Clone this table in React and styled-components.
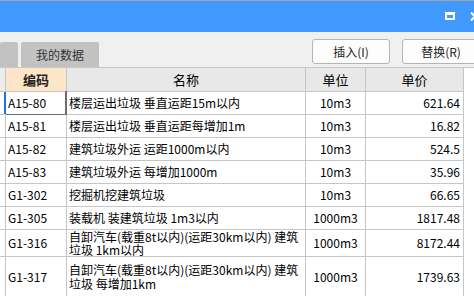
import React from "react";
import styled, {createGlobalStyle} from "styled-components";

const GlobalStyle = createGlobalStyle`
    body {
        margin: 0;
        font-family: "Noto Sans CJK SC", "Noto Sans", sans-serif;
        color: #000;
    }
`;

const Window = styled.div`
    width: 474px;
    height: 296px;
    overflow: hidden;
    background: #fff;
`;

const TitleBar = styled.div`
    height: 32px;
    box-sizing: border-box;
    border-top: 1px solid #a6a6a6;
    background: #4198fe;
    display: flex;
    justify-content: flex-end;
    align-items: flex-start;
    padding-top: 11px;
`;

const MaxIcon = styled.span`
    width: 10px;
    height: 8px;
    box-sizing: border-box;
    border: 2px solid #fff;
    border-top-width: 3px;
`;

const CloseIcon = styled.svg`
    margin-left: 15px;
    margin-right: -6px;
    flex-shrink: 0;
`;

const Toolbar = styled.div`
    height: 36px;
    box-sizing: border-box;
    background: #f0f0f0;
    border-bottom: 1px solid #c8c8c8;
    display: flex;
    justify-content: space-between;
    align-items: flex-end;
`;

const Tabs = styled.div`
    display: flex;
    gap: 3px;
`;

const Tab = styled.div`
    width: ${props => props.w}px;
    height: 25px;
    background: #c2c2c2;
    border-radius: 2px 2px 0 0;
    display: flex;
    align-items: center;
    justify-content: center;
    font-size: 12px;
    color: #333;
`;

const Actions = styled.div`
    align-self: flex-start;
    margin-top: 7px;
    margin-right: -6px;
    display: flex;
    gap: 12px;
`;

const Button = styled.button`
    width: 78px;
    height: 25px;
    padding: 0;
    background: #fdfdfd;
    border: 1px solid #b4b4b4;
    border-radius: 3px;
    font-family: inherit;
    font-size: 12px;
    color: #222;
    flex-shrink: 0;
`;

const Grid = styled.div`
    display: flex;
    flex-direction: column;
`;

const Row = styled.div`
    display: grid;
    grid-template-columns: 6px 61px 239px 60px 98px;
    height: ${props => props.h}px;
`;

const Cell = styled.div`
    position: relative;
    box-sizing: border-box;
    border-right: 1px solid #c6c6c6;
    border-bottom: 1px solid #c6c6c6;
    display: flex;
    align-items: center;
    justify-content: ${props => props.align === "right" ? "flex-end" : props.align === "center" ? "center" : "flex-start"};
    padding: ${props => props.align === "right" ? "0 3px 0 0" : props.align === "center" ? "0" : "0 0 0 2px"};
    font-size: 12px;
    line-height: ${props => props.lh || 14}px;
    white-space: pre-line;
    background: ${props => props.bg || "#fff"};
    ${props => props.focus && `
        &::before {
            content: "";
            position: absolute;
            left: -2px;
            top: 0;
            width: 2px;
            bottom: 0;
            background: #1a73e8;
        }
        &::after {
            content: "";
            position: absolute;
            left: 0;
            top: -1px;
            right: -1px;
            bottom: -1px;
            border-right: 2px solid #6d6d6d;
            border-bottom: 1px solid #6d6d6d;
            pointer-events: none;
        }
    `}
`;

const HeadCell = styled(Cell)`
    justify-content: center;
    padding: 0;
    font-size: 13px;
    font-weight: ${props => props.bold ? 700 : 400};
    color: ${props => props.bold ? "#222" : "#000"};
    background: ${props => props.bg || "#e8e8e8"};
`;

const Spacer = styled(Cell)`
    background: ${props => props.bg || "#fff"};
`;

const rows = [
    {code: "A15-80", name: "楼层运出垃圾 垂直运距15m以内", unit: "10m3", price: "621.64", h: 23},
    {code: "A15-81", name: "楼层运出垃圾 垂直运距每增加1m", unit: "10m3", price: "16.82", h: 23},
    {code: "A15-82", name: "建筑垃圾外运 运距1000m以内", unit: "10m3", price: "524.5", h: 23},
    {code: "A15-83", name: "建筑垃圾外运 每增加1000m", unit: "10m3", price: "35.96", h: 23},
    {code: "G1-302", name: "挖掘机挖建筑垃圾", unit: "10m3", price: "66.65", h: 23},
    {code: "G1-305", name: "装载机 装建筑垃圾 1m3以内", unit: "1000m3", price: "1817.48", h: 23},
    {code: "G1-316", name: "自卸汽车(载重8t以内)(运距30km以内) 建筑\n垃圾 1km以内", unit: "1000m3", price: "8172.44", h: 27, lh: 13},
    {code: "G1-317", name: "自卸汽车(载重8t以内)(运距30km以内) 建筑\n垃圾 每增加1km", unit: "1000m3", price: "1739.63", h: 40, lh: 14},
];

const App = () => (
    <Window>
        <GlobalStyle />
        <TitleBar>
            <MaxIcon />
            <CloseIcon width="10" height="9" viewBox="0 0 10 9">
                <path d="M1 0.5 L9 8.5 M9 0.5 L1 8.5" stroke="#fff" strokeWidth="2" />
            </CloseIcon>
        </TitleBar>
        <Toolbar>
            <Tabs>
                <Tab w={18} />
                <Tab w={78}>我的数据</Tab>
            </Tabs>
            <Actions>
                <Button>插入(I)</Button>
                <Button>替换(R)</Button>
            </Actions>
        </Toolbar>
        <Grid>
            <Row h={24}>
                <Spacer bg="#ececec" />
                <HeadCell bold bg="#fde6c8">编码</HeadCell>
                <HeadCell>名称</HeadCell>
                <HeadCell>单位</HeadCell>
                <HeadCell>单价</HeadCell>
            </Row>
            {rows.map((row, index) =>
                <Row h={row.h} key={row.code}>
                    <Spacer />
                    <Cell focus={index === 0}>{row.code}</Cell>
                    <Cell lh={row.lh}>{row.name}</Cell>
                    <Cell align="center">{row.unit}</Cell>
                    <Cell align="right">{row.price}</Cell>
                </Row>
            )}
        </Grid>
    </Window>
);

export default App;
